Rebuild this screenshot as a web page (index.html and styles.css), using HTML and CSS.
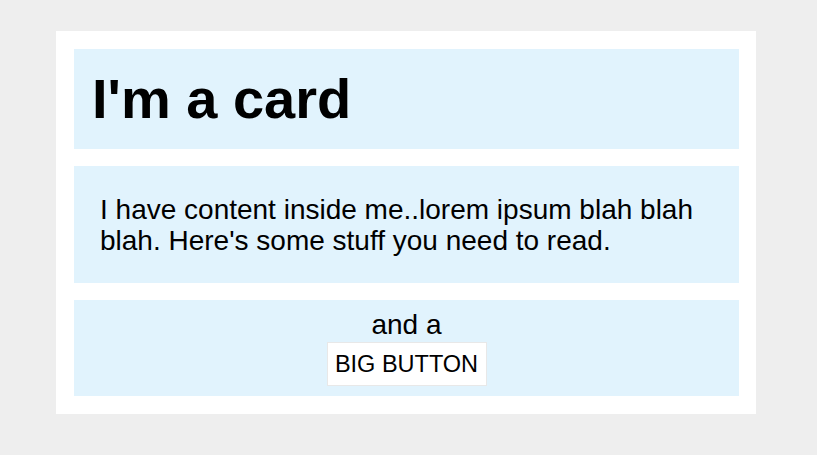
FILE: index.html
```html
<!DOCTYPE html>
<html>
<head>
<meta charset="utf-8">
<link rel="stylesheet" href="styles.css">
</head>
<body>
<div class="card">
  <div class="section header"><h1 class="title">I'm a card</h1></div>
  <div class="section content"><p class="text">I have content inside me..lorem ipsum blah blah blah. Here's some stuff you need to read.</p></div>
  <div class="section footer">
    <div class="lead">and a</div>
    <button class="big-button">BIG BUTTON</button>
  </div>
</div>
</body>
</html>
```
FILE: styles.css
```css
html, body {
  margin: 0;
  padding: 0;
}
body {
  background: #eeeeee;
  font-family: "Liberation Sans", Arial, sans-serif;
  color: #000;
}
.card {
  box-sizing: border-box;
  width: 700px;
  margin: 31px 0 0 56px;
  background: #fff;
  padding: 18px 17px 18px 18px;
  display: flex;
  flex-direction: column;
  gap: 17px;
}
.section {
  background: #e1f3fd;
}
.header {
  height: 100px;
  display: flex;
  align-items: center;
  padding: 0 18px;
}
.title {
  margin: 0;
  font-size: 56px;
  font-weight: bold;
  line-height: 1;
}
.content {
  height: 117px;
  display: flex;
  align-items: center;
  padding: 0 26px;
}
.text {
  margin: 0;
  font-size: 28px;
  line-height: 31px;
}
.footer {
  height: 96px;
  box-sizing: border-box;
  display: flex;
  flex-direction: column;
  align-items: center;
  padding-top: 10px;
}
.lead {
  font-size: 28px;
  line-height: 30px;
}
.big-button {
  margin-top: 2px;
  height: 44px;
  width: 160px;
  background: #fff;
  border: 1px solid #e8e8e8;
  font-family: "Liberation Sans", Arial, sans-serif;
  font-size: 23.5px;
  color: #000;
  padding: 0;
}
```
